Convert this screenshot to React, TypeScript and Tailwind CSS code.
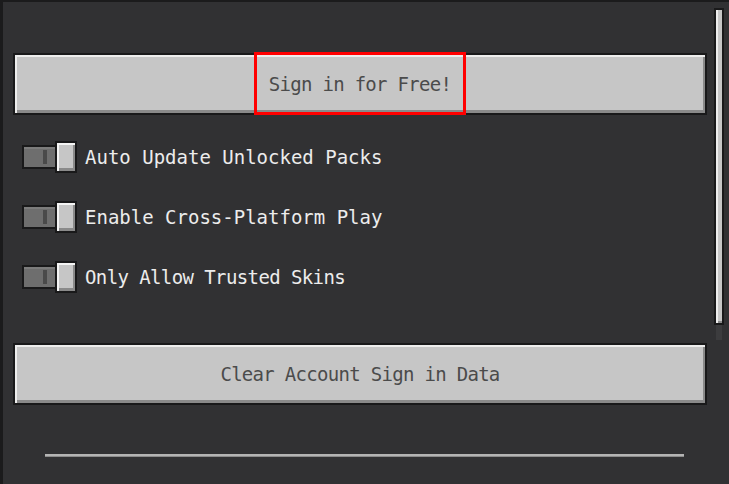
// Settings panel - account section with blocky buttons and toggles

interface ToggleRowProps {
  label: string;
  tracking?: string;
}

function BlockButton({ label, children }: { label: string; children?: React.ReactNode }) {
  return (
    <div className="relative h-[62px] border-2 border-[#19191a] bg-[#c6c6c6] shadow-[inset_2px_2px_0_#ededed,inset_-2px_-3px_0_#8a8a8a] flex items-center justify-center">
      <span className="text-[19px] leading-none tracking-[-0.7px] text-[#4b4b4b]">{label}</span>
      {children}
    </div>
  );
}

function ToggleRow({ label, tracking = 'tracking-[0px]' }: ToggleRowProps) {
  return (
    <div className="flex items-center h-[32px]">
      {/* track */}
      <div className="w-[35px] h-[24px] border-2 border-[#19191a] bg-[#6e6e6e] shadow-[inset_0_2px_0_#7c7c7c] flex items-center pl-[19px]">
        <div className="w-[4px] h-[14px] bg-[#4a4a4a]" />
      </div>
      {/* knob */}
      <div className="-ml-[2px] w-[22px] h-[32px] border-2 border-[#19191a] bg-[#c6c6c6] shadow-[inset_2px_2px_0_#f4f4f4,inset_-2px_-3px_0_#8a8a8a]" />
      <span className={`ml-[8px] text-[19px] leading-none text-[#ececec] ${tracking}`}>{label}</span>
    </div>
  );
}

export default function App() {
  return (
    <div className="w-[729px] h-[484px] bg-[#313133] border-l-[3px] border-t-[2px] border-[#1b1b1c] flex overflow-hidden font-['DejaVu_Sans_Mono',monospace]">
      {/* === Content column === */}
      <div className="w-[694px] ml-[10px] pt-[51px] flex flex-col">
        <BlockButton label="Sign in for Free!">
          <div className="absolute left-[239px] -top-[3px] w-[212px] h-[63px] border-[3px] border-[#ff0000] pointer-events-none" />
        </BlockButton>

        <div className="mt-[26px] pl-[9px] flex flex-col gap-[28px]">
          <ToggleRow label="Auto Update Unlocked Packs" />
          <ToggleRow label="Enable Cross-Platform Play" />
          <ToggleRow label="Only Allow Trusted Skins" tracking="tracking-[-0.6px]" />
        </div>

        <div className="mt-[50px]">
          <BlockButton label="Clear Account Sign in Data" />
        </div>

        {/* divider */}
        <div className="mt-[49px] ml-[32px] w-[639px] h-[3px] bg-[#b4b4b4] border-b border-[#8c8c8c]" />
      </div>

      {/* === Scrollbar === */}
      <div className="ml-[7px] mt-[6px] w-[10px] flex flex-col">
        <div className="h-[317px] border-2 border-[#19191a] bg-[#c6c6c6] shadow-[inset_2px_0_0_#ededed,inset_0_-2px_0_#8a8a8a]" />
        <div className="mx-[2px] h-[15px] bg-[#3c3c3e]" />
      </div>
    </div>
  );
}
